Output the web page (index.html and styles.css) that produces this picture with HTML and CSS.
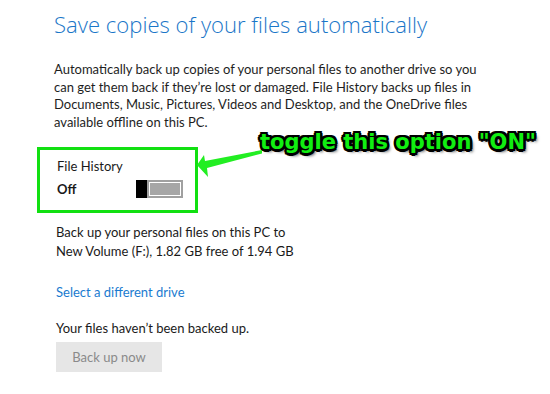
FILE: index.html
```html
<!DOCTYPE html>
<html>
<head>
<meta charset="utf-8">
<link rel="stylesheet" href="styles.css">
</head>
<body>
<div class="page">
  <h1 class="title">Save copies of your files automatically</h1>
  <p class="intro">Automatically back up copies of your personal files to another drive so you can get them back if they’re lost or damaged. File History backs up files in Documents, Music, Pictures, Videos and Desktop, and the OneDrive files available offline on this PC.</p>
  <div class="setting">
    <div class="setting-label">File History</div>
    <div class="setting-row">
      <span class="state">Off</span>
      <span class="toggle"><span class="thumb"></span><span class="track"></span></span>
    </div>
  </div>
  <p class="info">Back up your personal files on this PC to<br>New Volume (F:), 1.82 GB free of 1.94 GB</p>
  <a class="link" href="#">Select a different drive</a>
  <p class="status">Your files haven’t been backed up.</p>
  <button class="btn" disabled>Back up now</button>

  <div class="note">toggle this option "ON"</div>
  <svg class="arrow" width="80" height="40" viewBox="0 0 80 40">
    <path d="M7 25 L14 15 L15 21 L72 10 L72 13.5 L17 28 L18 37 Z" fill="#22ee22"/>
  </svg>
</div>
</body>
</html>
```
FILE: styles.css
```css
html, body {
  margin: 0;
  padding: 0;
  background: #ffffff;
}
.page {
  position: relative;
  width: 550px;
  height: 394px;
  padding-left: 54px;
  box-sizing: border-box;
  font-family: "Lato", "Open Sans", sans-serif;
  color: #1a1a1a;
  overflow: hidden;
}
.title {
  margin: 0;
  padding-top: 9px;
  font-family: "Open Sans", "Noto Sans", sans-serif;
  font-size: 22.1px;
  line-height: 30px;
  font-weight: 300;
  color: #1a76c8;
}
.intro {
  margin: 22px 0 0 0;
  width: 440px;
  font-size: 13px;
  line-height: 17.5px;
  color: #1e1e1e;
}
.setting {
  margin: 16px 0 0 -17px;
  width: 138px;
  height: 41px;
  border: 3px solid #11e011;
  padding: 7px 0 12px 17px;
  box-sizing: content-box;
}
.setting-label {
  font-size: 13px;
  line-height: 18px;
}
.setting-row {
  display: flex;
  align-items: center;
  margin-top: 5px;
}
.state {
  width: 79px;
  font-size: 13px;
  font-weight: 700;
  line-height: 18px;
}
.toggle {
  display: flex;
  width: 47px;
  height: 18px;
}
.thumb {
  width: 11px;
  height: 18px;
  background: #000;
}
.track {
  flex: 1;
  background: #a6a6a6;
  box-shadow: inset 0 0 0 2px #a0a0a0, inset 0 0 0 3px #ffffff;
}
.info {
  margin: 9.5px 0 0 2px;
  font-size: 13px;
  line-height: 19px;
}
.link {
  display: block;
  margin: 22px 0 0 2px;
  font-size: 13px;
  line-height: 18px;
  color: #1a7bd0;
  text-decoration: none;
}
.status {
  margin: 18px 0 0 2px;
  font-size: 13px;
  line-height: 18px;
}
.btn {
  display: block;
  margin: 5.5px 0 0 2px;
  width: 106px;
  height: 30px;
  border: none;
  background: #e6e6e6;
  color: #8a8a8a;
  font-family: "Lato", "Open Sans", sans-serif;
  font-size: 13px;
  padding: 0;
}
.note {
  position: absolute;
  left: 260px;
  top: 129px;
  font-family: "DejaVu Sans", sans-serif;
  font-weight: 700;
  font-size: 21px;
  line-height: 26px;
  color: #11ee11;
  text-shadow:
    -2px -2px 0 #000, 2px -2px 0 #000, -2px 2px 0 #000, 2px 2px 0 #000,
    0 -2.5px 0 #000, 0 2.5px 0 #000, -2.5px 0 0 #000, 2.5px 0 0 #000,
    3px 3px 3px rgba(0,0,0,0.6);
  white-space: nowrap;
}
.arrow {
  position: absolute;
  left: 190px;
  top: 140px;
}
```
